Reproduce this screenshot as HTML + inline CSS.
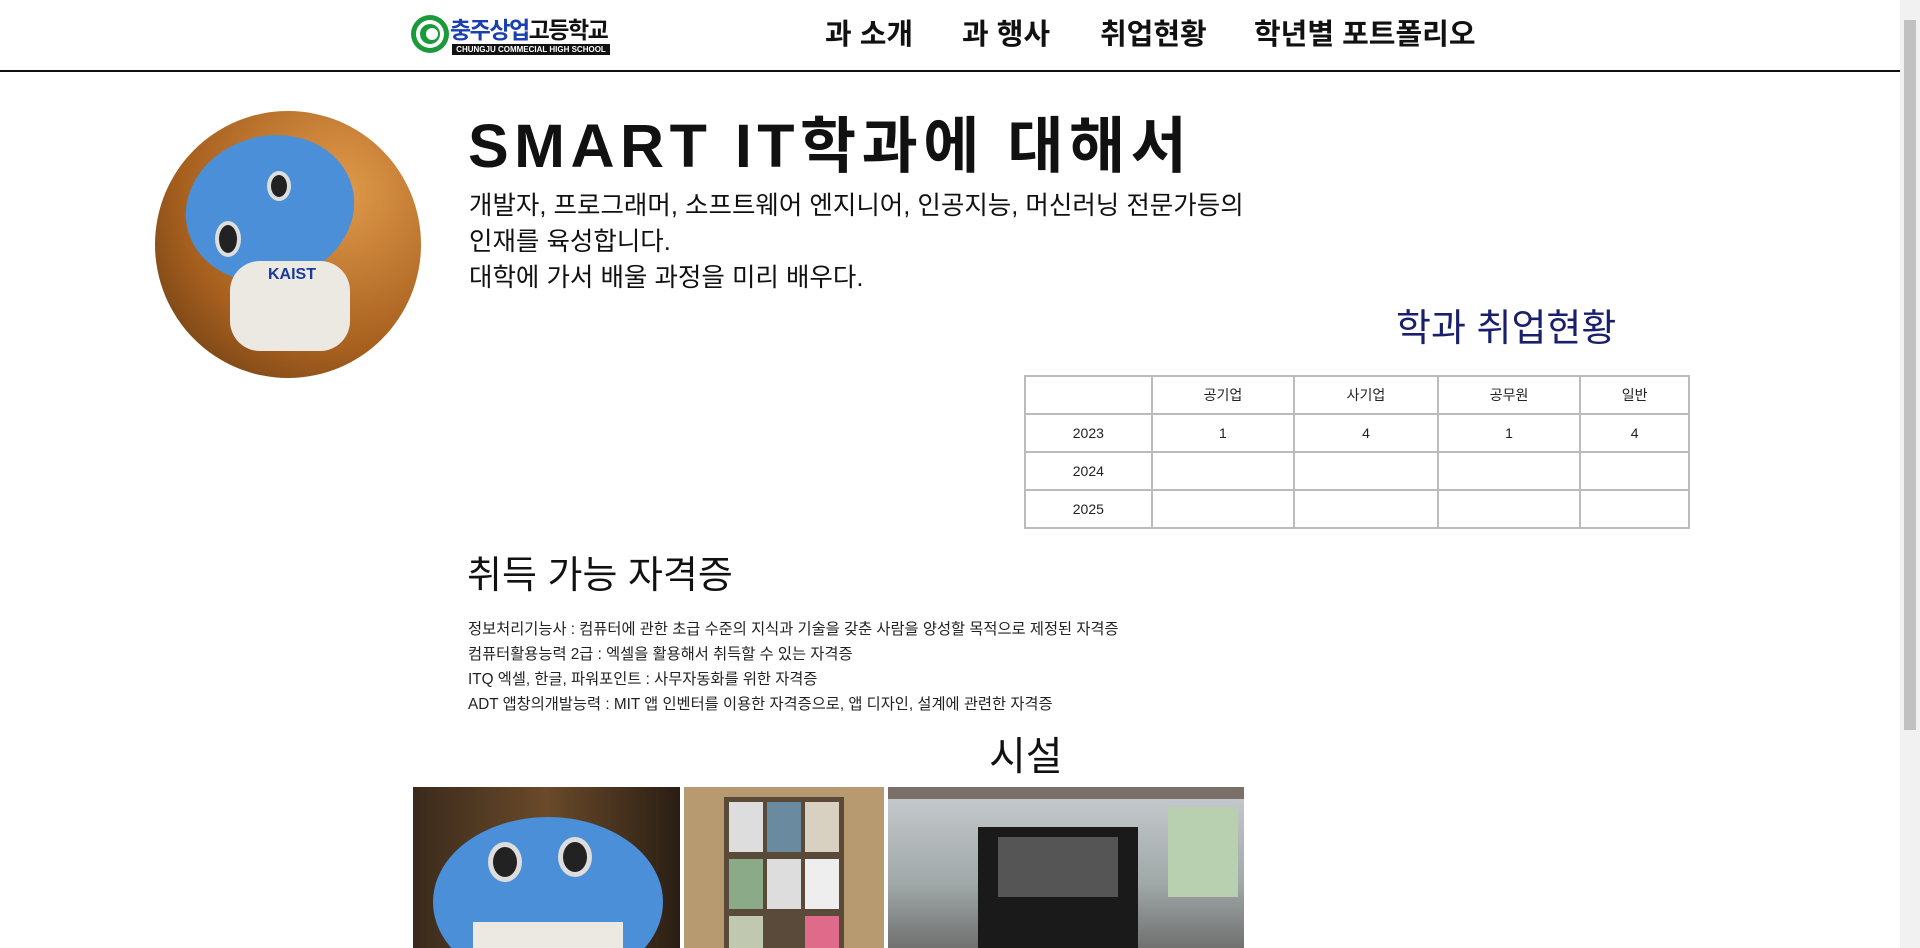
<!DOCTYPE html>
<html><head><meta charset="utf-8"><style>
*{margin:0;padding:0;box-sizing:border-box}
body{width:1920px;height:948px;overflow:hidden;background:#fff;font-family:"Liberation Sans","Noto Sans CJK KR",sans-serif;color:#111;position:relative}
.abs{position:absolute;white-space:nowrap}
.hdr{position:absolute;left:0;top:0;width:1900px;height:72px;border-bottom:2px solid #111}
.nav{font-size:29px;font-weight:bold;top:11px}
.sb{position:absolute;right:0;top:0;width:20px;height:948px;background:#f1f1f1}
.sb div{position:absolute;left:4px;top:20px;width:12px;height:710px;background:#c1c1c1}
table{position:absolute;left:1024px;top:375px;width:666px;border-collapse:collapse;font-size:14px;text-align:center}
td{border:2px solid #bbb;height:38px;color:#222}
.cert{font-size:15.3px;left:468px;color:#222}
</style></head><body>
<div class="hdr"></div>
<svg class="abs" style="left:410px;top:13px" width="40" height="42" viewBox="0 0 40 42"><circle cx="20" cy="21" r="19" fill="#1a9a3a"/><circle cx="20" cy="21" r="14" fill="#fff"/><circle cx="20" cy="21" r="10" fill="#1a9a3a"/><circle cx="22" cy="21" r="6" fill="#fff"/></svg>
<div class="abs" style="left:450px;top:11px;font-size:23px;font-weight:bold;letter-spacing:-1.5px"><span style="color:#1a3fb0">충주상업</span><span style="color:#111">고등학교</span></div>
<div class="abs" style="left:452px;top:44px;width:158px;height:11px;background:#111;color:#fff;font-size:8px;font-weight:bold;line-height:11px;text-align:center">CHUNGJU COMMECIAL HIGH SCHOOL</div>
<div class="abs nav" style="left:825px">과 소개</div>
<div class="abs nav" style="left:962px">과 행사</div>
<div class="abs nav" style="left:1100px">취업현황</div>
<div class="abs nav" style="left:1254px">학년별 포트폴리오</div>

<div class="abs" style="left:155px;top:111px;width:266px;height:267px;border-radius:50%;overflow:hidden;background:radial-gradient(ellipse at 70% 30%,#e09a4a,#a8601f 60%,#5a3410)">
<div style="position:absolute;left:30px;top:25px;width:170px;height:145px;border-radius:50%;background:#4a8fd8;transform:rotate(-15deg)"></div>
<div style="position:absolute;left:75px;top:150px;width:120px;height:90px;border-radius:30px;background:#ece9e2"></div>
<div style="position:absolute;left:112px;top:60px;width:24px;height:30px;border-radius:50%;background:#222;border:4px solid #ddd"></div>
<div style="position:absolute;left:60px;top:110px;width:26px;height:36px;border-radius:50%;background:#222;border:4px solid #ddd"></div>
<div style="position:absolute;left:113px;top:155px;font-size:16px;font-weight:bold;color:#1a3a9a">KAIST</div>
</div>

<div class="abs" style="left:468px;top:96px;font-size:61px;font-weight:bold;letter-spacing:5.5px">SMART IT학과에 대해서</div>
<div class="abs" style="left:469px;top:188px;font-size:25.5px;line-height:36px">개발자, 프로그래머, 소프트웨어 엔지니어, 인공지능, 머신러닝 전문가등의<br>인재를 육성합니다.<br>대학에 가서 배울 과정을 미리 배우다.</div>

<div class="abs" style="left:1396px;top:297px;font-size:38px;color:#1a1f6b">학과 취업현황</div>
<table>
<colgroup><col style="width:127px"><col style="width:143px"><col style="width:144px"><col style="width:143px"><col style="width:109px"></colgroup>
<tr><td></td><td>공기업</td><td>사기업</td><td>공무원</td><td>일반</td></tr>
<tr><td>2023</td><td>1</td><td>4</td><td>1</td><td>4</td></tr>
<tr><td>2024</td><td></td><td></td><td></td><td></td></tr>
<tr><td>2025</td><td></td><td></td><td></td><td></td></tr>
</table>

<div class="abs" style="left:467px;top:544px;font-size:38px">취득 가능 자격증</div>
<div class="abs cert" style="top:617px">정보처리기능사 : 컴퓨터에 관한 초급 수준의 지식과 기술을 갖춘 사람을 양성할 목적으로 제정된 자격증</div>
<div class="abs cert" style="top:642px">컴퓨터활용능력 2급 : 엑셀을 활용해서 취득할 수 있는 자격증</div>
<div class="abs cert" style="top:667px">ITQ 엑셀, 한글, 파워포인트 : 사무자동화를 위한 자격증</div>
<div class="abs cert" style="top:692px">ADT 앱창의개발능력 : MIT 앱 인벤터를 이용한 자격증으로, 앱 디자인, 설계에 관련한 자격증</div>
<div class="abs" style="left:989px;top:724px;font-size:40px">시설</div>

<div class="abs" style="left:413px;top:787px;width:267px;height:161px;overflow:hidden;background:linear-gradient(90deg,#3a2a1c,#6a4a2a 50%,#2a1e14)">
<div style="position:absolute;left:20px;top:30px;width:230px;height:170px;border-radius:50%;background:#4a8fd8"></div>
<div style="position:absolute;left:75px;top:55px;width:34px;height:40px;border-radius:50%;background:#222;border:5px solid #ddd"></div>
<div style="position:absolute;left:145px;top:50px;width:34px;height:40px;border-radius:50%;background:#222;border:5px solid #ddd"></div>
<div style="position:absolute;left:60px;top:135px;width:150px;height:40px;background:#ece9e2"></div>
</div>
<div class="abs" style="left:684px;top:787px;width:200px;height:161px;background:#b89a70;overflow:hidden">
<div style="position:absolute;left:40px;top:10px;width:120px;height:160px;background:#5a4a3a"></div>
<div style="position:absolute;left:45px;top:15px;width:34px;height:50px;background:#ddd"></div><div style="position:absolute;left:83px;top:15px;width:34px;height:50px;background:#6a8aa0"></div><div style="position:absolute;left:121px;top:15px;width:34px;height:50px;background:#d8d0c0"></div>
<div style="position:absolute;left:45px;top:72px;width:34px;height:50px;background:#8aaa88"></div><div style="position:absolute;left:83px;top:72px;width:34px;height:50px;background:#ddd"></div><div style="position:absolute;left:121px;top:72px;width:34px;height:50px;background:#eee"></div>
<div style="position:absolute;left:45px;top:129px;width:34px;height:40px;background:#c0c8b0"></div><div style="position:absolute;left:121px;top:129px;width:34px;height:40px;background:#e06a8a"></div>
</div>
<div class="abs" style="left:888px;top:787px;width:356px;height:161px;background:linear-gradient(180deg,#c8ccd0,#a0a8a8 60%,#707070);overflow:hidden">
<div style="position:absolute;left:0;top:0;width:356px;height:12px;background:#7a7068"></div>
<div style="position:absolute;left:90px;top:40px;width:160px;height:130px;background:#1a1a1a"></div>
<div style="position:absolute;left:110px;top:50px;width:120px;height:60px;background:#555"></div>
<div style="position:absolute;left:280px;top:20px;width:70px;height:90px;background:#b8d0b0"></div>
</div>

<div class="sb"><div></div></div>
</body></html>
